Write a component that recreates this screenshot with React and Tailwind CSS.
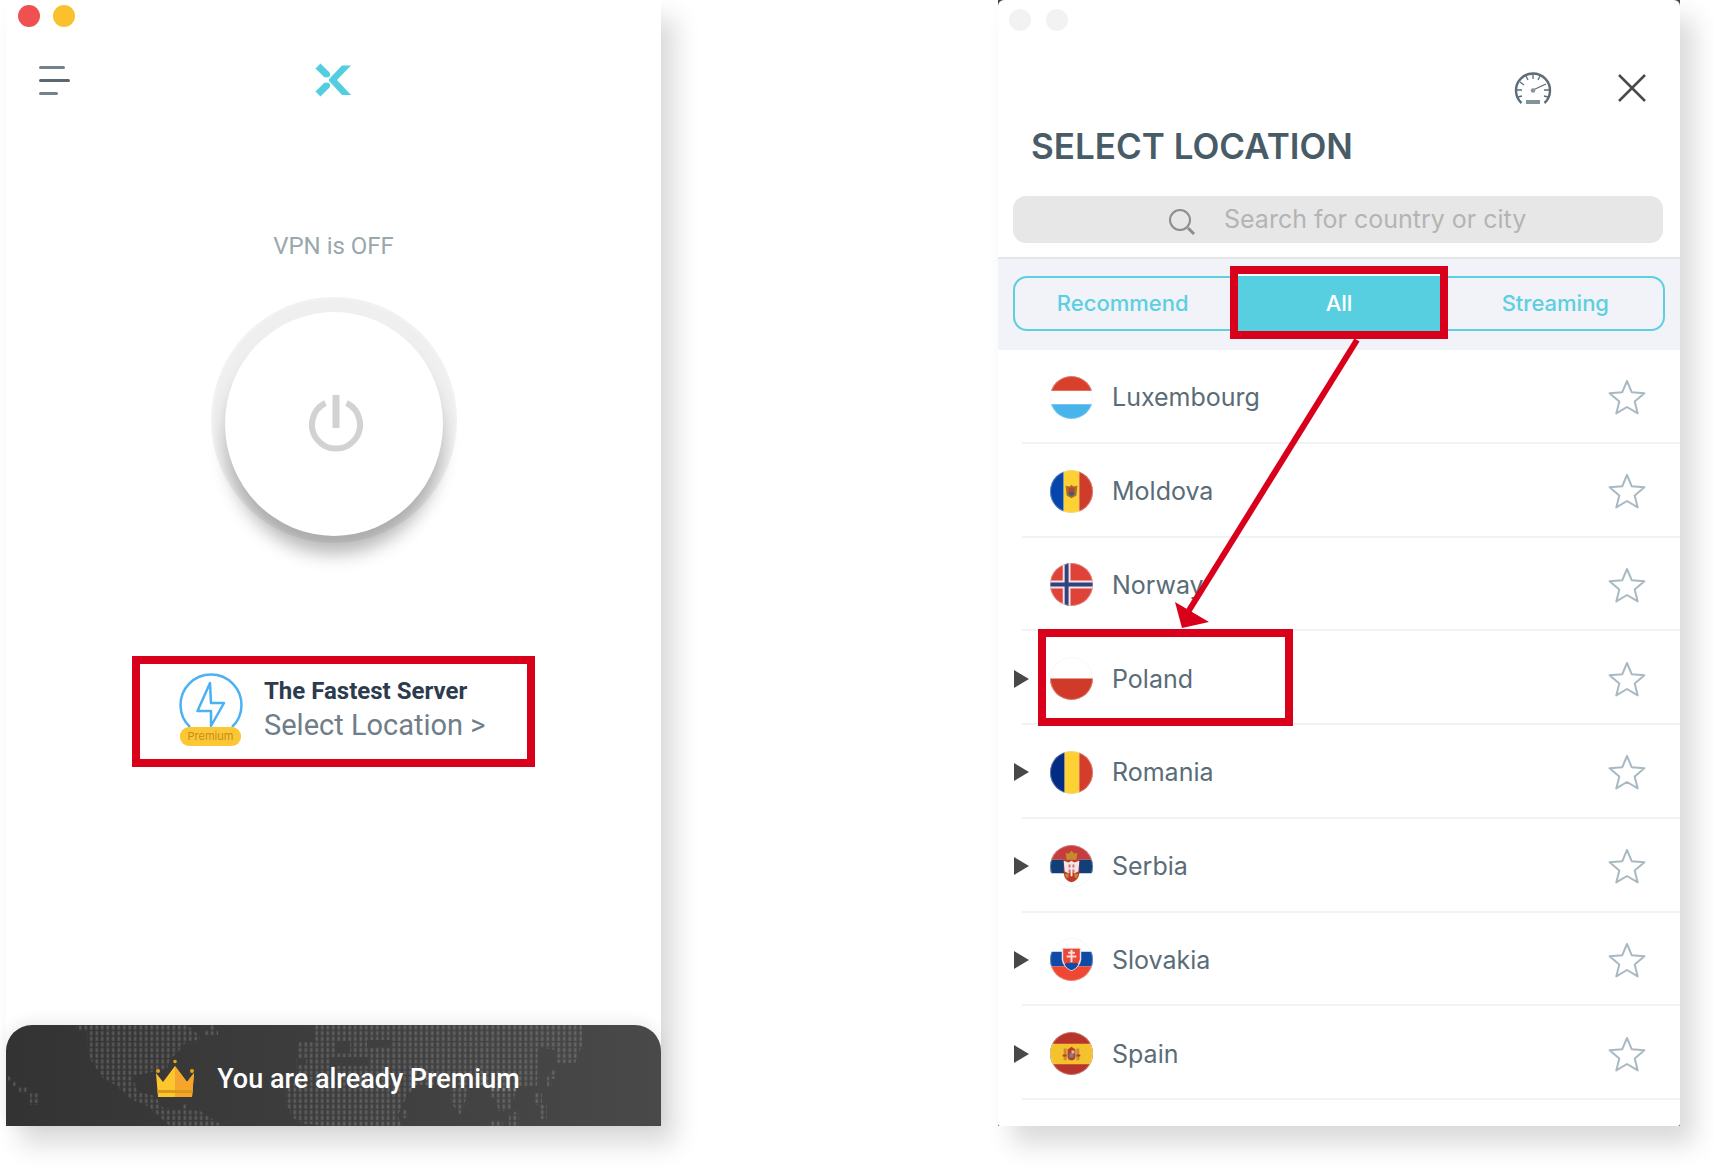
import { useState } from 'react';

const countries = [
  { name: 'Luxembourg', flag: 'lu', cities: false },
  { name: 'Moldova', flag: 'md', cities: false },
  { name: 'Norway', flag: 'no', cities: false },
  { name: 'Poland', flag: 'pl', cities: true, marked: true },
  { name: 'Romania', flag: 'ro', cities: true },
  { name: 'Serbia', flag: 'rs', cities: true },
  { name: 'Slovakia', flag: 'sk', cities: true },
  { name: 'Spain', flag: 'es', cities: true },
];

const flags = {
  lu: (
    <>
      <path fill="#fff" d="M0 0h44v44H0z" />
      <path fill="#d8402c" d="M0 0h44v15H0z" />
      <path fill="#47b5ec" d="M0 29h44v15H0z" />
    </>
  ),
  md: (
    <>
      <path fill="#0645ac" d="M0 0h14v44H0z" />
      <path fill="#fdd034" d="M14 0h16v44H14z" />
      <path fill="#cf3c2c" d="M30 0h14v44H30z" />
      <path fill="#a5742a" d="M16 16l4 1 2-2 2 2 4-1-1 10-5 3-5-3z" />
      <path fill="#c8402c" d="M19 18h6v4h-6z" />
      <path fill="#4d5a6c" d="M19 22h6v3l-3 2-3-2z" />
    </>
  ),
  no: (
    <>
      <path fill="#df4238" d="M0 0h44v44H0z" />
      <path fill="#f4e4e6" d="M13 0h8v44h-8z M0 18h44v8H0z" />
      <path fill="#2e4380" d="M15 0h4v44h-4z M0 20h44v4H0z" />
    </>
  ),
  pl: (
    <>
      <path fill="#fff" d="M0 0h44v22H0z" />
      <path fill="#d03b29" d="M0 22h44v22H0z" />
    </>
  ),
  ro: (
    <>
      <path fill="#022b83" d="M0 0h15v44H0z" />
      <path fill="#fdd034" d="M15 0h15v44H15z" />
      <path fill="#d33d2a" d="M30 0h14v44H30z" />
    </>
  ),
  rs: (
    <>
      <path fill="#fff" d="M0 0h44v44H0z" />
      <path fill="#c63d3e" d="M0 0h44v15H0z" />
      <path fill="#123f78" d="M0 15h44v14H0z" />
      <path fill="#c0392b" d="M14 15h16v14q-1 8-8 9q-7-1-8-9z" />
      <path fill="#f1e6e8" d="M14 16l5 2 3-2 3 2 5-2-1 11-4 2-3-3-3 3-4-2z" />
      <path fill="#d9696a" d="M19 20h6v8h-6z" />
      <path fill="#f1e6e8" d="M21 19h2v13h-2z M18 23h8v2h-8z" />
      <path fill="#c88a2b" d="M16 8l3 1 3-3 3 3 3-1-1 7H17z M15 30l4-1v4l-2 1z M29 30l-4-1v4l2 1z" />
    </>
  ),
  sk: (
    <>
      <path fill="#fff" d="M0 0h44v44H0z" />
      <path fill="#0f4ba5" d="M0 14h44v15H0z" />
      <path fill="#ee4734" d="M0 29h44v15H0z" />
      <path fill="#dfe4ee" d="M12 10h20v12q-1 8-10 12q-9-4-10-12z" />
      <path fill="#ee4734" d="M13.500 11h17v11q-1 3-2 5h-13q-2-3-2-5z" />
      <path fill="#0f4ba5" d="M15 27q3-3 5-1q2-3 4 0q3-2 5 1q-2 4-7 6q-5-2-7-6z" />
      <path fill="#fbdcd8" d="M21 12h2v13h-2z M18.500 14h7v2h-7z M17 18h10v2H17z" />
    </>
  ),
  es: (
    <>
      <path fill="#b8352b" d="M0 0h44v44H0z" />
      <path fill="#f4c22f" d="M0 12h44v21H0z" />
      <path fill="#c98c35" d="M14 17h3v12h-3z M27 17h3v12h-3z" />
      <path fill="#b5402e" d="M18 18l4-3 4 3v8q-1 3-4 3t-4-3z M13 23h4v2h-4z M27 23h4v2h-4z" />
      <path fill="#7c7f9a" d="M20 22h4v4h-4z" />
      <path fill="#e5b8a0" d="M22 19h3v3h-3z" />
    </>
  ),
};

const Flag = ({ code }) => (
  <svg viewBox="0 0 44 44" className="size-[43px] shrink-0 rounded-full">
    {flags[code]}
    <circle cx="22" cy="22" r="21.500" fill="none" stroke="#dfe5e8" strokeOpacity="0.400" />
  </svg>
);

const StarIcon = () => (
  <svg viewBox="0 0 38 36" className="h-9 w-[38px]" fill="none" stroke="#a9b9c2" strokeWidth="2" strokeLinejoin="round">
    <path d="M19 2l4.700 11.200 12.700 1-9.700 8.200 3 12L19 28l-10.700 6.400 3-12L1.600 14.200l12.700-1z" />
  </svg>
);

const GaugeIcon = () => (
  <svg viewBox="0 0 38 34" className="h-[34px] w-[38px]" fill="none" stroke="#5c6d79">
    <path strokeWidth="2.400" d="M7.500 32A17 17 0 1 1 30.500 32" />
    <path strokeWidth="1.300" d="M19 3v5M12 5l2 4M26 5l-2 4M6 11l4 3M3 19h5M30 19h5M4 26l4-1M34 26l-4-1M19 19l13-6" />
    <circle cx="19" cy="19.500" r="2.300" fill="#8795a0" stroke="none" />
    <path stroke="#84929c" strokeWidth="4" d="M12 31h14" />
  </svg>
);

const LogoIcon = () => (
  <svg viewBox="0 0 36 34" className="h-[34px] w-9" fill="#53cde0">
    <path d="M36 2.500h-9L14.500 15.500q-1.500 1.500 0 3L27 32h9L22 17z" />
    <path stroke="#53cde0" strokeWidth="7" d="M3 3l9 9M3 31l9-9" />
    <circle cx="12" cy="11.500" r="3" />
    <circle cx="12" cy="22.500" r="3" />
  </svg>
);

const FastestIcon = () => (
  <svg viewBox="0 0 64 74" className="h-[74px] w-16" fill="none" stroke="#4cb1f2" strokeWidth="2.500">
    <path d="M11 54A30.500 30.500 0 1 1 53 54" />
    <path strokeLinejoin="round" d="M31 10L18.500 38H32V53L45 30H32z" />
    <rect x="1" y="54" width="61" height="19" rx="9" fill="#fbc735" stroke="none" />
    <text x="31.500" y="67" textAnchor="middle" fontSize="11" fill="#c98a1e" stroke="none">Premium</text>
  </svg>
);

const CrownIcon = () => (
  <svg viewBox="0 0 40 40" className="size-10">
    <path fill="#fdc62f" d="M1 14l7 9L20 7l12 16 7-9-2 24H3z" />
    <path fill="#f5a52c" d="M20 7l12 16 7-9-2 24H20z" />
    <path fill="#d99a1c" d="M2.500 31h35v3h-35z" />
    <circle cx="20" cy="2.500" r="1.800" fill="#e6a41d" />
    <circle cx="3" cy="12" r="2" fill="#e6a41d" />
    <circle cx="37" cy="12" r="2" fill="#e6a41d" />
  </svg>
);

const DottedMap = () => (
  <svg viewBox="0 0 655 101" preserveAspectRatio="xMidYMid slice" className="absolute inset-0 size-full">
    <defs>
      <pattern id="dots" width="5.500" height="5.650" patternUnits="userSpaceOnUse">
        <rect x="1.500" y="0.500" width="2.500" height="4" fill="#fff" fillOpacity="0.170" />
      </pattern>
    </defs>
    <g fill="url(#dots)" fillRule="evenodd">
      <path d="M70 0H181L194 11V15L181 16 171 28 164 34 161 44 151 46 127 51 131 66 149 71 157 83 194 86 217 101H164L141 81 124 74 111 61 97 53 82 31 81 6H70z" />
      <path d="M203 0h6v5h3v5h-15V5h6z M2 51h4v5H2z M7 57h5v5H7z M13 62h9v6h-9z M24 68h9v12h-9z M175 79h5v5h-5z" />
      <path d="M307 0H576V20L569 38H549V25L532 22 531 61H512L511 66H484L480 60H410L404 68H400V73L392 90 395 101H313L308 99H298L285 92 284 85 279 80V62L290 56V34H300V40H291V16H307z M331 17h13v11h-13z M361 15h23v7h-23z M324 32h38v9h-38z" />
      <path d="M444 62h18l-4 20-4 8-10-14z M484 62h27l-6 22-12 3-3-12-6-4z M483 95h14v6h-14z M503 90l10-5v16h-10z M527 68h9v12h5v14h-7l-2-14h-5z M545 45h6v9h-5v8h-5v-9z M395 84h7v9h-7z" />
    </g>
  </svg>
);

const HomeWindow = () => (
  <section className="flex min-h-[1126px] flex-col bg-white shadow-[14px_18px_24px_rgba(0,0,0,0.15)]">
    <div className="flex gap-[13px] pt-[5px] pl-[12px]">
      <button aria-label="Close" className="size-[22px] rounded-full bg-[#f05150]" />
      <button aria-label="Minimize" className="size-[22px] rounded-full bg-[#fac12f]" />
    </div>
    <header className="mt-9 grid grid-cols-3 items-center px-[33px]">
      <button aria-label="Menu" className="flex w-8 flex-col gap-[10px]">
        <span className="h-[3px] w-[26px] rounded-full bg-[#75828c]" />
        <span className="h-[3px] w-[31px] rounded-full bg-[#596873]" />
        <span className="h-[3px] w-[19px] rounded-full bg-[#75828c]" />
      </button>
      <div className="flex justify-center">
        <LogoIcon />
      </div>
    </header>

    <p className="mt-[133px] text-center text-[24px] leading-8 text-[#9ba7ae] font-['Roboto',sans-serif]">VPN is OFF</p>

    <div className="mt-[35px] flex justify-center">
      <button
        aria-label="Turn VPN on"
        className="flex size-[246px] items-start justify-center rounded-full bg-[#efefef] pt-[15px] shadow-[inset_0_0_4px_#f8f8f8]"
      >
        <span className="flex h-[224px] w-[218px] items-center justify-center rounded-[50%] bg-white pl-1 shadow-[0_20px_18px_-2px_rgba(0,0,0,0.28)]">
          <svg viewBox="0 0 54 58" className="h-[58px] w-[54px]" fill="none" stroke="#d2d2d2" strokeWidth="6">
            <path d="M16.500 8A24 24 0 1 0 37.500 8" />
            <path d="M27 0v33" strokeWidth="7" />
          </svg>
        </span>
      </button>
    </div>

    <div className="mt-[113px] flex justify-center">
      <button className="flex h-[111px] w-[403px] items-center gap-[21px] border-8 border-[#d9001b] pb-1 pl-[39px] text-left">
        <FastestIcon />
        <span className="flex flex-col pb-[2px]">
          <span className="text-[24px] leading-8 font-bold text-[#2c3b4d] font-['Roboto',sans-serif]">The Fastest Server</span>
          <span className="text-[29px] leading-9 text-[#6f7e88] font-['Roboto',sans-serif]">Select Location &gt;</span>
        </span>
      </button>
    </div>

    <footer className="relative mt-auto flex h-[101px] items-center justify-center gap-[22px] overflow-hidden rounded-t-[26px] bg-linear-to-r from-[#333] to-[#494949] pt-[6px] pl-2 shadow-[0_-4px_14px_rgba(0,0,0,0.08)]">
      <DottedMap />
      <span className="relative">
        <CrownIcon />
      </span>
      <span className="relative text-[27px] leading-9 font-medium text-white font-['Roboto',sans-serif]">You are already Premium</span>
    </footer>
  </section>
);

const CountryRow = ({ country }) => (
  <li className="relative flex flex-1 flex-col">
    <div className="flex flex-1 items-center pt-[3px] pr-[34px] pl-4">
      {country.cities ? (
        <button aria-label={`Show cities in ${country.name}`} className="w-[15px]">
          <svg viewBox="0 0 15 18" className="h-[18px] w-[15px]" fill="#484848">
            <path d="M0 0l15 9-15 9z" />
          </svg>
        </button>
      ) : (
        <span className="w-[15px]" />
      )}
      <button className="ml-[21px] flex flex-1 items-center gap-[19px] text-left text-[25px] leading-8 text-[#596c77]">
        <Flag code={country.flag} />
        {country.name}
      </button>
      <button aria-label={`Add ${country.name} to favorites`}>
        <StarIcon />
      </button>
    </div>
    <div className="ml-6 h-0.5 bg-[#f1f2f3]" />
    {country.marked && (
      <div className="pointer-events-none absolute -top-[2px] left-10 h-[97px] w-[255px] border-8 border-[#d9001b]" />
    )}
  </li>
);

const LocationWindow = () => {
  const [tab, setTab] = useState('All');
  const tabClass = 'h-[55px] border-2 border-[#5ccfe0] text-[22px] font-medium text-[#5ccfe0]';

  return (
    <section className="relative bg-[#444] shadow-[14px_18px_24px_rgba(0,0,0,0.15)]">
      <div className="flex min-h-[1126px] flex-col rounded-t-md rounded-b-xs bg-white">
        <div className="flex gap-[15px] pt-[9px] pl-[11px]">
          <button aria-label="Close window" className="size-[22px] rounded-full bg-[#f2f2f2]" />
          <button aria-label="Minimize window" className="size-[22px] rounded-full bg-[#f2f2f2]" />
        </div>
        <div className="mt-10 flex items-center justify-end gap-[66px] pr-[34px]">
          <button aria-label="Speed test">
            <GaugeIcon />
          </button>
          <button aria-label="Back">
            <svg viewBox="0 0 28 28" className="size-7" fill="none" stroke="#4a4a4a" strokeWidth="2.500">
              <path d="M1 1l26 26M27 1L1 27" />
            </svg>
          </button>
        </div>
        <h1 className="mt-[21px] pl-[33px] text-[35px] leading-10 font-semibold text-[#485c67]">SELECT LOCATION</h1>

        <label className="mt-[30px] mr-[17px] ml-[15px] flex h-[47px] items-center gap-7 rounded-[13px] bg-[#e7e7e7] pl-[155px]">
          <svg viewBox="0 0 28 28" className="mt-1 size-7 shrink-0" fill="none" stroke="#8d8d8d" strokeWidth="2">
            <circle cx="12" cy="12" r="10" />
            <path strokeWidth="3" d="M20 20l6 6" />
          </svg>
          <input
            type="search"
            aria-label="Search for country or city"
            placeholder="Search for country or city"
            className="min-w-0 flex-1 bg-transparent text-[25px] outline-none placeholder:text-[#b4b4b4]"
          />
        </label>

        <div className="mt-[14px] border-t-2 border-[#e3e5e7] bg-[#f1f3f8] pt-[17px] pr-[15px] pb-[19px] pl-[15px]">
          <div className="grid grid-cols-3">
            <button onClick={() => setTab('Recommend')} className={`${tabClass} rounded-l-[14px] border-r-0`}>
              Recommend
            </button>
            <button
              onClick={() => setTab('All')}
              aria-pressed={tab === 'All'}
              className="relative h-[55px] bg-[#57cfe0] text-[22px] font-medium text-white"
            >
              All
              <span className="pointer-events-none absolute inset-x-0 -top-[10px] -bottom-2 border-8 border-[#d9001b] shadow-[inset_0_2px_0_#fff]" />
            </button>
            <button onClick={() => setTab('Streaming')} className={`${tabClass} rounded-r-[14px] border-l-0`}>
              Streaming
            </button>
          </div>
        </div>

        <ul className="flex h-[750px] flex-col">
          {countries.map(country => (
            <CountryRow key={country.name} country={country} />
          ))}
        </ul>
      </div>

      <svg viewBox="0 0 200 290" className="pointer-events-none absolute top-[339px] left-[170px] h-[290px] w-[200px]">
        <path d="M189 1L20 273" stroke="#d9001b" strokeWidth="6" />
        <path d="M7 263l7 26 27-6z" fill="#d9001b" />
      </svg>
    </section>
  );
};

export default function App() {
  return (
    <main className="grid min-h-[1168px] grid-cols-[655fr_337fr_682fr] items-start overflow-hidden bg-white pr-[34px] pl-[6px] font-['Inter',sans-serif]">
      <HomeWindow />
      <div />
      <LocationWindow />
    </main>
  );
}
